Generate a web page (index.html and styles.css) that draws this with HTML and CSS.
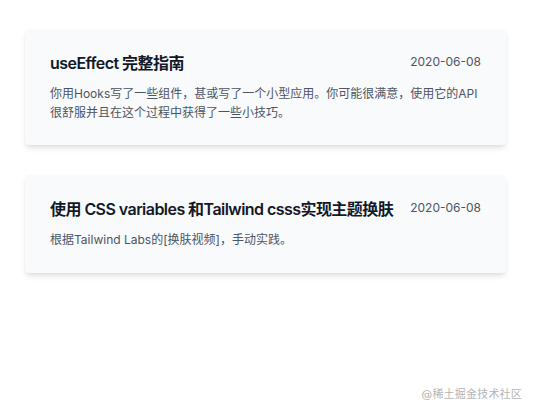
FILE: index.html
```html
<!DOCTYPE html>
<html lang="zh-CN">
<head>
<meta charset="utf-8">
<title>Posts</title>
<link rel="stylesheet" href="styles.css">
</head>
<body>
<main class="list">
  <article class="card">
    <header class="card-head">
      <h2 class="title">useEffect 完整指南</h2>
      <time class="date">2020-06-08</time>
    </header>
    <p class="desc">你用Hooks写了一些组件，甚或写了一个小型应用。你可能很满意，使用它的API很舒服并且在这个过程中获得了一些小技巧。</p>
  </article>
  <article class="card">
    <header class="card-head">
      <h2 class="title">使用 CSS variables 和Tailwind csss实现主题换肤</h2>
      <time class="date">2020-06-08</time>
    </header>
    <p class="desc">根据Tailwind Labs的[换肤视频]，手动实践。</p>
  </article>
</main>
<div class="watermark">@稀土掘金技术社区</div>
</body>
</html>
```

FILE: styles.css
```css
html, body {
  margin: 0;
  padding: 0;
  background: #ffffff;
}
body {
  font-family: Inter, "Noto Sans CJK SC", sans-serif;
  width: 534px;
  height: 411px;
  position: relative;
  overflow: hidden;
}
.list {
  display: flex;
  flex-direction: column;
  gap: 30px;
  padding: 29px 0 0 25px;
  width: 481px;
}
.card {
  background: #f9fafb;
  border-radius: 4px;
  box-shadow: 0 4px 6px -1px rgba(0, 0, 0, 0.1), 0 2px 4px -1px rgba(0, 0, 0, 0.06);
  padding: 22px 25px 23px 25px;
}
.card-head {
  display: flex;
  justify-content: space-between;
  align-items: flex-start;
  gap: 8px;
}
.title {
  margin: 0;
  font-size: 16px;
  line-height: 24px;
  font-weight: 600;
  letter-spacing: -0.55px;
  color: #111827;
  white-space: nowrap;
}
.date {
  flex-shrink: 0;
  font-size: 12px;
  line-height: 22px;
  color: #4b5563;
  white-space: nowrap;
}
.desc {
  margin: 10px 0 0 0;
  font-size: 12px;
  line-height: 18.5px;
  color: #4b5563;
}
.watermark {
  position: absolute;
  right: 12px;
  bottom: 10px;
  font-size: 11px;
  color: #b4b4b4;
  letter-spacing: 0.2px;
}
```
